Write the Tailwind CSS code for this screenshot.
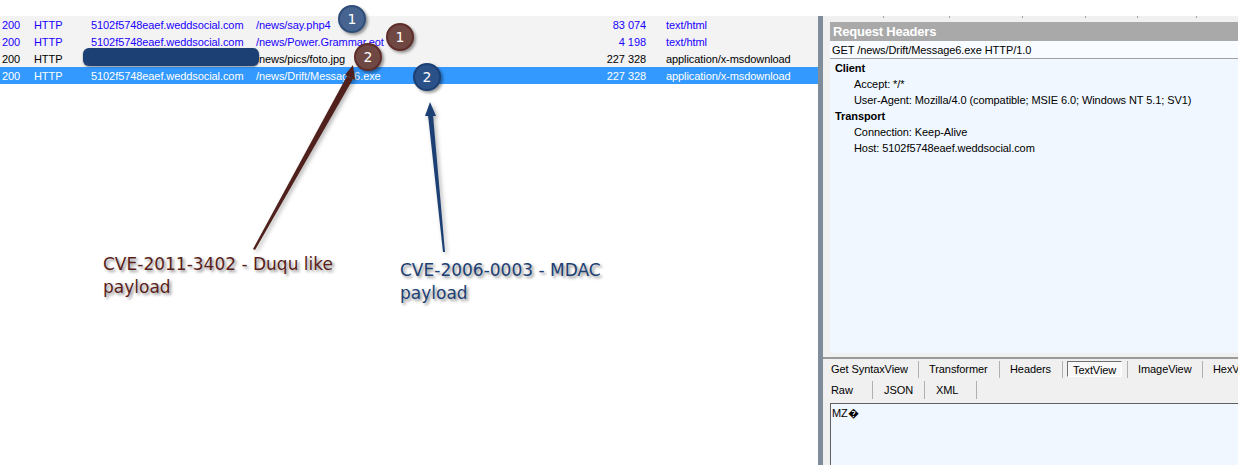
<!DOCTYPE html>
<html lang="en">
<head>
  <meta charset="UTF-8" />
  <title>HTTP capture</title>
  <script src="https://cdn.jsdelivr.net/npm/@tailwindcss/browser@4"></script>
</head>
<body class="relative h-[465px] w-[1238px] overflow-hidden bg-white font-['Liberation_Sans',sans-serif] text-[11px] leading-[17px] tracking-[-0.08px] text-black">

  <div class="flex h-full pt-4">
    <!-- SESSION LIST -->
    <div class="w-[818px] shrink-0 leading-[19px]">
      <div class="grid h-[17px] grid-cols-[32px_57px_165px_290px_100px_1fr] bg-[#f3f3f3] pl-[2px] text-[#1a00ff]">
        <span>200</span><span>HTTP</span><span>5102f5748eaef.weddsocial.com</span><span>/news/say.php4</span><span class="text-right">83 074</span><span class="pl-5">text/html</span>
      </div>
      <div class="grid h-[17px] grid-cols-[32px_57px_165px_290px_100px_1fr] bg-[#f3f3f3] pl-[2px] text-[#1a00ff]">
        <span>200</span><span>HTTP</span><span>5102f5748eaef.weddsocial.com</span><span>/news/Power.Grammar.eot</span><span class="text-right">4 198</span><span class="pl-5">text/html</span>
      </div>
      <div class="grid h-[17px] grid-cols-[32px_57px_165px_290px_100px_1fr] bg-[#f3f3f3] pl-[2px]">
        <span>200</span><span>HTTP</span><span></span><span>/news/pics/foto.jpg</span><span class="text-right">227 328</span><span class="pl-5">application/x-msdownload</span>
      </div>
      <div class="grid h-[17px] grid-cols-[32px_57px_165px_290px_100px_1fr] bg-[#3399ff] pl-[2px] text-white">
        <span>200</span><span>HTTP</span><span>5102f5748eaef.weddsocial.com</span><span>/news/Drift/Message6.exe</span><span class="text-right">227 328</span><span class="pl-5">application/x-msdownload</span>
      </div>
    </div>

    <!-- SPLITTER -->
    <div class="w-[5px] shrink-0 bg-[#7f8c99]"></div>

    <!-- INSPECTOR -->
    <div class="flex min-w-0 flex-1 flex-col bg-[#f0f0f0]">
      <div class="flex h-[6px] shrink-0 items-start pl-[60px] text-[0px]">
        <span class="h-[2px] w-px bg-[#a0a0a0]"></span>
        <span class="ml-[65px] h-[2px] w-px bg-[#a0a0a0]"></span>
        <span class="ml-[72px] h-[2px] w-px bg-[#a0a0a0]"></span>
        <span class="ml-[62px] h-[2px] w-px bg-[#a0a0a0]"></span>
        <span class="ml-[51px] h-[2px] w-px bg-[#a0a0a0]"></span>
        <span class="ml-[58px] h-[2px] w-px bg-[#a0a0a0]"></span>
      </div>

      <div class="ml-[7px] flex h-[331px] shrink-0 flex-col bg-[#f0f7ff]">
        <div class="h-[19px] bg-[#a9a9a9] pl-[3px] text-[13px] font-bold leading-[19px] tracking-[-0.2px] text-white">Request Headers</div>
        <div class="h-[18px] border-b border-[#a0a0a0] bg-white/50 pl-[2px] leading-[18px]">GET /news/Drift/Message6.exe HTTP/1.0</div>
        <div class="pt-[1px]">
          <div class="pl-[5px] font-bold leading-[16px]">Client</div>
          <div class="pl-[24px] leading-[16px]">Accept: */*</div>
          <div class="pl-[24px] leading-[16px]">User-Agent: Mozilla/4.0 (compatible; MSIE 6.0; Windows NT 5.1; SV1)</div>
          <div class="pl-[5px] font-bold leading-[16px]">Transport</div>
          <div class="pl-[24px] leading-[16px]">Connection: Keep-Alive</div>
          <div class="pl-[24px] leading-[16px]">Host: 5102f5748eaef.weddsocial.com</div>
        </div>
      </div>

      <div class="h-[4px] shrink-0"></div>
      <div class="h-[2px] shrink-0 bg-[#9a9a9a]"></div>

      <!-- TABS -->
      <div class="flex h-[20px] shrink-0 items-center overflow-hidden whitespace-nowrap pl-[8px]">
        <span class="w-[87px] shrink-0">Get SyntaxView</span>
        <span class="h-[17px] w-px shrink-0 bg-[#b0b0b0]"></span>
        <span class="w-[80px] shrink-0 pl-[10px]">Transformer</span>
        <span class="h-[17px] w-px shrink-0 bg-[#b0b0b0]"></span>
        <span class="w-[62px] shrink-0 pl-[10px]">Headers</span>
        <span class="h-[17px] w-px shrink-0 bg-[#b0b0b0]"></span>
        <span class="ml-[4px] h-[16px] w-[55px] shrink-0 border border-t-[#707070] border-r-white border-b-white border-l-[#707070] bg-[#f8f8f8] pl-[5px] leading-[16px]">TextView</span>
        <span class="ml-[5px] h-[17px] w-px shrink-0 bg-[#b0b0b0]"></span>
        <span class="w-[74px] shrink-0 pl-[10px]">ImageView</span>
        <span class="h-[17px] w-px shrink-0 bg-[#b0b0b0]"></span>
        <span class="shrink-0 pl-[10px]">HexV</span>
      </div>
      <div class="mt-[2px] flex h-[18px] shrink-0 items-center pl-[8px]">
        <span class="w-[41px] shrink-0">Raw</span>
        <span class="h-[18px] w-px shrink-0 bg-[#b0b0b0]"></span>
        <span class="w-[51px] shrink-0 pl-[11px]">JSON</span>
        <span class="h-[18px] w-px shrink-0 bg-[#b0b0b0]"></span>
        <span class="w-[51px] shrink-0 pl-[11px]">XML</span>
        <span class="h-[18px] w-px shrink-0 bg-[#b0b0b0]"></span>
      </div>

      <div class="mt-[4px] ml-[7px] flex-1 border-t border-l border-[#606060] bg-[#f0f7ff] pl-[1px] pt-[1px] leading-[16px]">MZ&#65533;</div>
    </div>
  </div>

  <!-- ANNOTATIONS -->
  <div class="absolute left-[83px] top-[48px] h-[18px] w-[176px] rounded-[6px] bg-[#1c3f74] shadow-[0_1px_2px_rgba(0,0,0,0.4)]"></div>

  <svg class="absolute left-0 top-0 drop-shadow-[2px_2px_2px_rgba(0,0,0,0.3)]" width="1238" height="465" viewBox="0 0 1238 465">
    <polygon points="253,249 255,250 353,79 347,76" fill="#4f201c" />
    <polygon points="353,65 355,80 345,75" fill="#4f201c" />
    <polygon points="443,252 445,252 433,115 428,115" fill="#1c3f74" />
    <polygon points="430,102 436,116 425,116" fill="#1c3f74" />
  </svg>

  <div class="absolute left-[338px] top-[5px] flex h-[28px] w-[28px] items-center justify-center rounded-full border-2 border-[#2f4d7a] bg-[#46648f] font-['DejaVu_Sans',sans-serif] text-[14px] text-white shadow-[2px_2px_3px_rgba(0,0,0,0.4)]">1</div>
  <div class="absolute left-[386px] top-[23px] flex h-[28px] w-[28px] items-center justify-center rounded-full border-2 border-[#5e2d2a] bg-[#704843] font-['DejaVu_Sans',sans-serif] text-[14px] text-white shadow-[2px_2px_3px_rgba(0,0,0,0.4)]">1</div>
  <div class="absolute left-[354px] top-[43px] flex h-[28px] w-[28px] items-center justify-center rounded-full border-2 border-[#5e2d2a] bg-[#704843] font-['DejaVu_Sans',sans-serif] text-[14px] text-white shadow-[2px_2px_3px_rgba(0,0,0,0.4)]">2</div>
  <div class="absolute left-[413px] top-[63px] flex h-[28px] w-[28px] items-center justify-center rounded-full border-2 border-[#1c3f74] bg-[#2b5288] font-['DejaVu_Sans',sans-serif] text-[14px] text-white shadow-[2px_2px_3px_rgba(0,0,0,0.4)]">2</div>

  <div class="absolute left-[103px] top-[253px] w-[250px] font-['DejaVu_Sans',sans-serif] text-[17px] leading-[23px] tracking-normal text-[#5a1f1a] [text-shadow:2px_2px_3px_rgba(0,0,0,0.45)]">CVE-2011-3402 - Duqu like payload</div>
  <div class="absolute left-[400px] top-[259px] w-[220px] font-['DejaVu_Sans',sans-serif] text-[17px] leading-[23px] tracking-normal text-[#1c3f74] [text-shadow:2px_2px_3px_rgba(0,0,0,0.45)]">CVE-2006-0003 - MDAC payload</div>

</body>
</html>
